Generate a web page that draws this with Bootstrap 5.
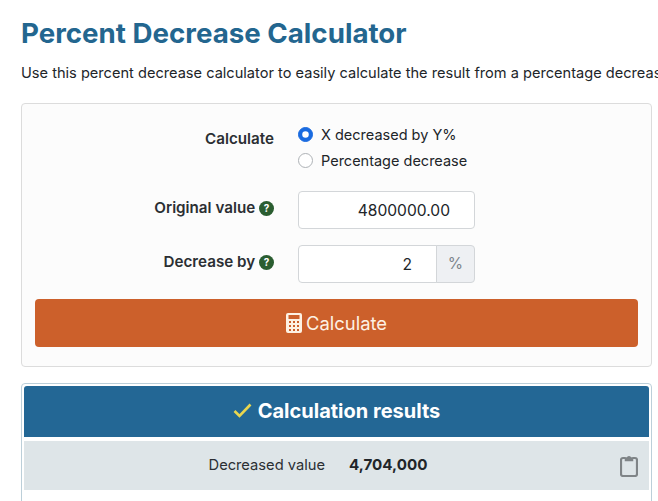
<!DOCTYPE html>
<html lang="en">
<head>
    <meta charset="UTF-8">
    <meta name="viewport" content="width=device-width, initial-scale=1">
    <title>Percent Decrease Calculator</title>
    <link href="https://cdn.jsdelivr.net/npm/bootstrap@5.3.0/dist/css/bootstrap.min.css" rel="stylesheet">
    <style>
        html, body { height: 501px; overflow: hidden; }
        body { font-family: Inter, "Liberation Sans", sans-serif; font-size: 15px; color: #212529; background: #fff; }
        .page-wrap { padding: 14px 6px 0 21px; }
        .page-title { font-size: 27.7px; font-weight: 700; color: #23668f; line-height: 38px; margin: 0 0 11px; white-space: nowrap; }
        .page-intro { font-size: 14.6px; line-height: 20px; margin: 0 -6px 20px 0; white-space: nowrap; overflow: hidden; }
        .calc-box { height: 264px; padding: 18px 13px 0; background: #fcfcfc; border: 1px solid #dcdcdc; border-radius: 4px; margin-bottom: 16px; }
        .calc-row { display: flex; gap: 24px; }
        .calc-label { width: 239px; flex: none; padding-top: 5.5px; text-align: right; font-weight: 600; font-size: 15.2px; color: #2b2f33; }
        .help-dot { display: inline-flex; width: 15px; height: 15px; align-items: center; justify-content: center; border-radius: 50%; background: #2a5d30; color: #fff; font-size: 10px; font-weight: 700; vertical-align: 1px; }
        .calc-radio { min-height: 0; height: 26px; margin: 0; font-size: 14.5px; line-height: 26px; padding-left: 23px; }
        .calc-radio .form-check-input { width: 15px; height: 15px; margin-top: 5px; margin-left: -23px; border-color: #aeb2b6; }
        .calc-radio .form-check-input:checked { background-color: #1a6be0; border-color: #1a6be0; }
        .calc-first { margin-top: 17px; }
        .calc-next { margin-top: 16px; }
        .calc-input { width: 177px; height: 38px; padding: 6px 24px 6px 6px; text-align: right; font-size: 15.6px; border-color: #d3d6d9; border-radius: 4px; }
        .calc-group { width: 177px; height: 38px; }
        .calc-group .form-control { height: 38px; padding: 6px 24px 6px 6px; text-align: right; font-size: 15.6px; border-color: #d3d6d9; border-radius: 4px 0 0 4px; }
        .calc-group .input-group-text { width: 39px; justify-content: center; padding: 0; font-size: 15.6px; color: #7d858c; background: #eef0f3; border-color: #d3d6d9; border-radius: 0 4px 4px 0; }
        .calc-btn { height: 48px; margin-top: 16px; padding-top: 8px; font-size: 18.4px; color: #fdf1e3; background: #cc602b; border: 0; border-radius: 4px; }
        .calc-btn svg { width: 16px; height: 20px; vertical-align: -3px; margin-right: -1px; }
        .result-box { padding: 2px; border: 1px solid #bccfd9; border-radius: 4px; height: 200px; }
        .result-head { height: 51px; padding-bottom: 2px; background: #236795; color: #fff; font-size: 20px; font-weight: 700; border-radius: 3px 3px 0 0; margin-bottom: 4px; }
        .result-head svg { width: 19px; height: 15px; margin-right: 2px; }
        .result-row { height: 49px; background: #dee5e8; font-size: 14.7px; position: relative; }
        .result-name { width: 301px; text-align: right; flex: none; color: #2b2f33; }
        .result-value { margin-left: 24px; font-weight: 700; font-size: 15.2px; }
        .copy-icon { position: absolute; right: 11px; top: 13px; width: 18px; height: 23px; }
    </style>
</head>
<body>
    <div class="page-wrap">
        <h1 class="page-title">Percent Decrease Calculator</h1>
        <p class="page-intro">Use this percent decrease calculator to easily calculate the result from a percentage decrease of any number.</p>

        <form class="calc-box">
            <div class="calc-row">
                <div class="calc-label">Calculate</div>
                <div>
                    <div class="form-check calc-radio">
                        <input class="form-check-input" type="radio" name="mode" id="m1" checked>
                        <label class="form-check-label" for="m1">X decreased by Y%</label>
                    </div>
                    <div class="form-check calc-radio">
                        <input class="form-check-input" type="radio" name="mode" id="m2">
                        <label class="form-check-label" for="m2">Percentage decrease</label>
                    </div>
                </div>
            </div>
            <div class="calc-row calc-first">
                <div class="calc-label">Original value <span class="help-dot">?</span></div>
                <input class="form-control calc-input" type="text" value="4800000.00">
            </div>
            <div class="calc-row calc-next">
                <div class="calc-label">Decrease by <span class="help-dot">?</span></div>
                <div class="input-group calc-group">
                    <input class="form-control" type="text" value="2">
                    <span class="input-group-text">%</span>
                </div>
            </div>
            <button type="button" class="btn calc-btn w-100">
                <svg viewBox="0 0 16 20"><path fill="currentColor" fill-rule="evenodd" d="M2 0h12a2 2 0 0 1 2 2v16a2 2 0 0 1-2 2H2a2 2 0 0 1-2-2V2a2 2 0 0 1 2-2zM2.500 2v4h11V2zM3 8v2h2V8zm4 0v2h2V8zm4 0v2h2V8zM3 12v2h2v-2zm4 0v2h2v-2zm4 0v2h2v-2zM3 16v2h2v-2zm4 0v2h2v-2zm4 0v2h2v-2z"/></svg>
                Calculate
            </button>
        </form>

        <div class="result-box">
            <div class="result-head d-flex align-items-center justify-content-center">
                <svg viewBox="0 0 19 15"><path fill="none" stroke="#e9d64f" stroke-width="2.600" d="M1.500 8l5 5L17.500 1.500"/></svg>
                <span class="ms-1">Calculation results</span>
            </div>
            <div class="result-row d-flex align-items-center">
                <div class="result-name">Decreased value</div>
                <div class="result-value">4,704,000</div>
                <svg class="copy-icon" viewBox="0 0 18 23"><path fill="none" stroke="#7f8487" stroke-width="2.200" d="M5.500 4H3a2 2 0 0 0-2 2v14a2 2 0 0 0 2 2h12a2 2 0 0 0 2-2V6a2 2 0 0 0-2-2h-2.500"/><path fill="#7f8487" stroke="#7f8487" stroke-width="1.500" d="M5.500 6.500V4h1.800a1.800 1.800 0 0 1 3.400 0h1.800v2.500z"/></svg>
            </div>
        </div>
    </div>
    <script src="https://cdn.jsdelivr.net/npm/bootstrap@5.3.0/dist/js/bootstrap.bundle.min.js"></script>
</body>
</html>
